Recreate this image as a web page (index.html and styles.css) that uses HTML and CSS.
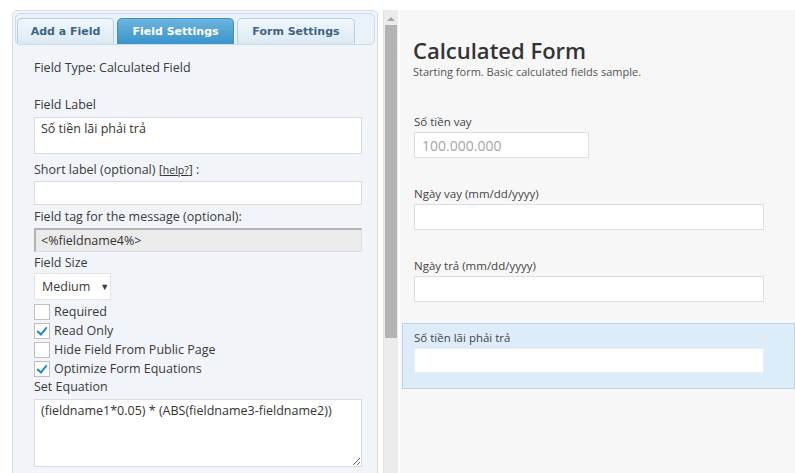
FILE: index.html
```html
<!DOCTYPE html>
<html>
<head>
    <meta charset="utf-8">
    <link rel="stylesheet" href="styles.css">
</head>
<body>
    <div class="page">
        <div class="sidebar">
            <div class="panel">
                <div class="tabs">
                    <span class="tab tab-add">Add a Field</span>
                    <span class="tab tab-field active">Field Settings</span>
                    <span class="tab tab-form">Form Settings</span>
                </div>
                <div class="settings">
                    <div class="field-type">Field Type: Calculated Field</div>

                    <label class="lbl lbl-first">Field Label</label>
                    <textarea class="box label-box">Số tiền lãi phải trả</textarea>

                    <label class="lbl">Short label (optional) [<a href="#" class="help">help?</a>] :</label>
                    <input class="box text-box" type="text">

                    <label class="lbl">Field tag for the message (optional):</label>
                    <input class="box text-box readonly" type="text" value="<%fieldname4%>" readonly>

                    <label class="lbl lbl-size">Field Size</label>
                    <div class="select">Medium <span class="caret">▼</span></div>

                    <div class="checks">
                        <div class="check-row"><span class="checkbox"></span>Required</div>
                        <div class="check-row"><span class="checkbox checked"></span>Read Only</div>
                        <div class="check-row"><span class="checkbox"></span>Hide Field From Public Page</div>
                        <div class="check-row"><span class="checkbox checked"></span>Optimize Form Equations</div>
                    </div>

                    <label class="lbl lbl-equation">Set Equation</label>
                    <textarea class="box equation-box">(fieldname1*0.05) * (ABS(fieldname3-fieldname2))</textarea>
                </div>
            </div>
            <div class="scrollbar">
                <div class="scroll-arrow"></div>
                <div class="scroll-thumb"></div>
            </div>
        </div>

        <div class="preview">
            <div class="form-head">
                <h1>Calculated Form</h1>
                <p>Starting form. Basic calculated fields sample.</p>
            </div>

            <div class="form-field">
                <label>Số tiền vay</label>
                <input class="small" type="text" placeholder="100.000.000">
            </div>
            <div class="form-field">
                <label>Ngày vay (mm/dd/yyyy)</label>
                <input class="wide" type="text">
            </div>
            <div class="form-field">
                <label>Ngày trả (mm/dd/yyyy)</label>
                <input class="wide" type="text">
            </div>
            <div class="form-field selected">
                <label>Số tiền lãi phải trả</label>
                <input class="wide" type="text">
            </div>
        </div>
    </div>
</body>
</html>
```

FILE: styles.css
```css
body {
    margin: 0;
    background: #fff;
    font-family: 'Open Sans', 'Noto Sans', sans-serif;
    color: #333;
}

.page {
    display: flex;
    height: 473px;
    overflow: hidden;
}

/* Left: field settings */

.sidebar {
    width: 400px;
    flex: none;
    display: flex;
    padding: 10px 0 0 12px;
    box-sizing: border-box;
}

.panel {
    width: 366px;
    height: 480px;
    box-sizing: border-box;
    background: #f1f5f9;
    border: 1px solid #d9dee3;
    border-radius: 5px 5px 0 0;
    padding: 2px;
}

.tabs {
    display: flex;
    gap: 3px;
    height: 32px;
    box-sizing: border-box;
    padding: 4px 0 0 1px;
    background: #eaf2f9;
    border: 1px solid #c6dbec;
    border-radius: 5px;
}

.tab {
    display: flex;
    align-items: center;
    justify-content: center;
    box-sizing: border-box;
    white-space: nowrap;
    font-family: 'DejaVu Sans', Verdana, sans-serif;
    font-weight: bold;
    font-size: 11px;
    color: #3d6587;
    background: linear-gradient(#f1f7fc, #dbe9f5);
    border: 1px solid #b5cfe5;
    border-bottom: none;
    border-radius: 5px 5px 0 0;
}

.tab-add { width: 97px; }
.tab-field { width: 117px; }
.tab-form { width: 118px; }

.tab.active {
    color: #fff;
    background: linear-gradient(#6db5e0, #3a93cb);
    border-color: #3e8fc4;
}

.settings {
    padding: 14px 0 0 19px;
    font-size: 12.5px;
    color: #3a3a3a;
}

.field-type,
.lbl {
    display: block;
    line-height: 18px;
}

.lbl {
    margin-top: 3px;
}

.lbl-first {
    margin-top: 19px;
}

.lbl-size {
    margin-top: 2px;
}

.lbl-equation {
    margin-top: 0;
}

.box {
    display: block;
    box-sizing: border-box;
    width: 328px;
    margin: 0;
    font-family: 'Open Sans', 'Noto Sans', sans-serif;
    font-size: 12.5px;
    color: #333;
    background: #fff;
    border: 1px solid #dcdcdc;
    outline: none;
}

.label-box {
    height: 37px;
    margin-top: 3px;
    padding: 2px 6px;
    resize: none;
    margin-bottom: 7px;
}

.text-box {
    height: 24px;
    margin-top: 2px;
    padding: 0 6px;
}

.text-box.readonly {
    background: #ebebeb;
    border-top: 2px solid #b4b4b4;
    border-left: 2px solid #b4b4b4;
    padding-left: 5px;
}

.help {
    color: #333;
    font-size: 10.5px;
}

.select {
    display: flex;
    align-items: center;
    width: 77px;
    height: 27px;
    margin-top: 1px;
    box-sizing: border-box;
    padding-left: 7px;
    background: #fff;
    border: 1px solid #e4e4e4;
}

.caret {
    font-size: 9px;
    margin-left: 10px;
}

.checks {
    margin-top: 2px;
}

.check-row {
    display: flex;
    align-items: center;
    height: 19px;
}

.checkbox {
    position: relative;
    width: 16px;
    height: 16px;
    box-sizing: border-box;
    margin-right: 4px;
    background: #fff;
    border: 1px solid #bfbfbf;
}

.checkbox.checked::after {
    content: '';
    position: absolute;
    left: 4px;
    top: 1px;
    width: 4px;
    height: 8px;
    border: solid #1e8cbe;
    border-width: 0 2px 2px 0;
    transform: rotate(40deg);
}

.equation-box {
    height: 68px;
    margin-top: 3px;
    padding: 2px 6px;
    resize: vertical;
}

/* Scrollbar */

.scrollbar {
    width: 14px;
    margin-left: 5px;
    background: #ececec;
    border-left: 1px solid #e2e2e2;
    height: 470px;
}

.scroll-arrow {
    width: 0;
    height: 0;
    margin: 7px auto 4px;
    border-left: 4px solid transparent;
    border-right: 4px solid transparent;
    border-bottom: 4px solid #a8a8a8;
}

.scroll-thumb {
    height: 313px;
    margin: 0 1px;
    background: #b4b4b4;
}

/* Right: form preview */

.preview {
    flex: 1;
    margin-top: 10px;
    background: #f7f7f7;
    padding-top: 27px;
}

.form-head {
    padding-left: 13px;
    margin-bottom: 28px;
}

.form-head h1 {
    margin: 0;
    font-size: 22px;
    font-weight: 600;
    line-height: 26px;
    color: #333;
}

.form-head p {
    margin: 2px 0 0;
    font-size: 11px;
    line-height: 14px;
    color: #555;
}

.form-field {
    height: 66px;
    margin: 0 0 6px 2px;
    box-sizing: border-box;
    padding: 6px 0 0 11px;
    border: 1px solid transparent;
}

.form-field label {
    display: block;
    font-size: 11.5px;
    line-height: 16px;
    color: #444;
}

.form-field input {
    display: block;
    box-sizing: border-box;
    height: 26px;
    margin-top: 2px;
    padding: 0 7px;
    background: #fff;
    border: 1px solid #dedede;
    font-family: 'Open Sans', 'Noto Sans', sans-serif;
    font-size: 14px;
    outline: none;
}

.form-field input::placeholder {
    color: #a5a5a5;
}

.form-field .small {
    width: 175px;
}

.form-field .wide {
    width: 350px;
}

.form-field.selected {
    background: #ddecf9;
    border-color: #bcd3ea;
}

.form-field.selected input {
    height: 25px;
    border-color: #e8eef3;
}
```
